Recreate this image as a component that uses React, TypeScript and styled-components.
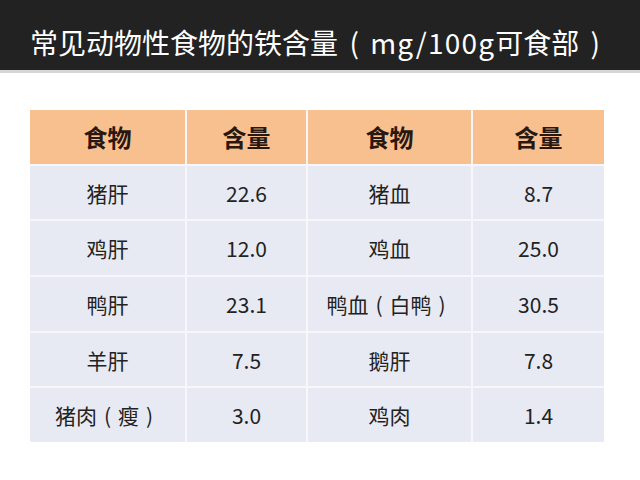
import React from 'react'
import styled, { createGlobalStyle } from 'styled-components'

const GlobalStyle = createGlobalStyle`
  html, body {
    margin: 0;
    padding: 0;
    background: #ffffff;
    font-family: "Microsoft YaHei", "Noto Sans CJK SC", "Noto Sans", sans-serif;
  }
`

const Page = styled.div`
  width: 640px;
  height: 480px;
  overflow: hidden;
  background: #ffffff;
`

const TitleBar = styled.div`
  height: 73px;
  background: #222222;
  border-bottom: 3px solid #d6d6d6;
  padding: 28px 0 0 30px;
  box-sizing: border-box;
`

const Title = styled.h1`
  margin: 0;
  color: #ffffff;
  font-size: 28px;
  font-weight: 400;
  line-height: 1;
  white-space: nowrap;
`

const Latin = styled.span`
  letter-spacing: 1.2px;
`

// full-width bracket with the glyph centred in its box
const Paren = styled.span<{ $w?: number }>`
  display: inline-block;
  width: ${p => p.$w ?? 1}em;
  text-align: center;
`

const TableWrap = styled.div`
  padding: 37px 0 0 30px;
`

const Grid = styled.div`
  display: grid;
  grid-template-columns: 155px 119px 163px 131px;
  grid-auto-rows: 53.7px;
  gap: 2px;
  width: 574px;
  background: #f7f7fb;
`

const Cell = styled.div<{ $head?: boolean }>`
  display: flex;
  align-items: center;
  justify-content: center;
  background: ${p => (p.$head ? '#f9c08f' : '#e8eaf3')};
  color: ${p => (p.$head ? '#2a1810' : '#222222')};
  font-size: ${p => (p.$head ? '24px' : '21px')};
  font-weight: ${p => (p.$head ? 700 : 400)};
  white-space: nowrap;
`

// split "鸭血（白鸭）" into text and centred brackets
const withParens = (s: string) =>
  s.split(/([（）])/).map((part, i) =>
    part === '（' ? <Paren key={i}>(</Paren> : part === '）' ? <Paren key={i}>)</Paren> : part
  )

const rows: [string, string, string, string][] = [
  ['猪肝', '22.6', '猪血', '8.7'],
  ['鸡肝', '12.0', '鸡血', '25.0'],
  ['鸭肝', '23.1', '鸭血（白鸭）', '30.5'],
  ['羊肝', '7.5', '鹅肝', '7.8'],
  ['猪肉（瘦）', '3.0', '鸡肉', '1.4'],
]

export default function App() {
  return (
    <Page>
      <GlobalStyle />
      <TitleBar>
        <Title>
          常见动物性食物的铁含量<Paren $w={1.15}>(</Paren>
          <Latin>mg/100g</Latin>可食部<Paren $w={1.15}>)</Paren>
        </Title>
      </TitleBar>
      <TableWrap>
        <Grid>
          {['食物', '含量', '食物', '含量'].map((h, i) => (
            <Cell $head key={'h' + i}>{h}</Cell>
          ))}
          {rows.map((r, ri) =>
            r.map((c, ci) => <Cell key={ri + '-' + ci}>{withParens(c)}</Cell>)
          )}
        </Grid>
      </TableWrap>
    </Page>
  )
}
